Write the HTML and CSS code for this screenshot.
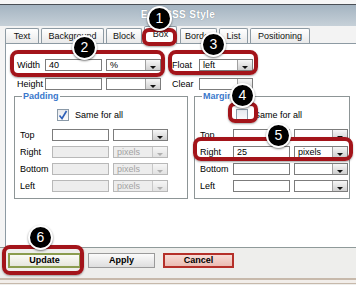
FILE: index.html
```html
<!DOCTYPE html>
<html>
<head>
<meta charset="utf-8">
<link rel="stylesheet" href="styles.css">
</head>
<body>
<div class="screen">
  <div class="topstrip"></div>
  <div class="titlebar">Edit CSS Style</div>
  <div class="tabstrip">
    <div class="tab t-text">Text</div>
    <div class="tab t-bg">Background</div>
    <div class="tab t-block">Block</div>
    <div class="tab t-box active">Box</div>
    <div class="tab t-border">Border</div>
    <div class="tab t-list">List</div>
    <div class="tab t-pos">Positioning</div>
  </div>
  <div class="panel">
    <div class="row r1">
      <span class="lbl lw">Width</span>
      <span class="inp w57">40</span>
      <span class="sel w55"><span class="val">%</span><span class="btn"></span></span>
      <span class="lbl lf">Float</span>
      <span class="sel w54"><span class="val">left</span><span class="btn"></span></span>
    </div>
    <div class="row r2">
      <span class="lbl lw">Height</span>
      <span class="inp w57"></span>
      <span class="sel w55"><span class="val"></span><span class="btn"></span></span>
      <span class="lbl lf">Clear</span>
      <span class="sel w54"><span class="val"></span><span class="btn"></span></span>
    </div>
    <div class="sets">
      <fieldset class="fs fs-pad">
        <legend>Padding</legend>
        <div class="same"><span class="cb checked"><svg width="10" height="10" viewBox="0 0 10 10"><path d="M1.5 5.5 L4 8.5 L8.5 1" fill="none" stroke="#2d5fb8" stroke-width="1.6"/></svg></span><span class="same-t">Same for all</span></div>
        <div class="frow"><span class="flbl">Top</span><span class="inp w57"></span><span class="sel w55"><span class="val"></span><span class="btn"></span></span></div>
        <div class="frow dis"><span class="flbl">Right</span><span class="inp w57"></span><span class="sel w55"><span class="val">pixels</span><span class="btn"></span></span></div>
        <div class="frow dis"><span class="flbl">Bottom</span><span class="inp w57"></span><span class="sel w55"><span class="val">pixels</span><span class="btn"></span></span></div>
        <div class="frow dis"><span class="flbl">Left</span><span class="inp w57"></span><span class="sel w55"><span class="val">pixels</span><span class="btn"></span></span></div>
      </fieldset>
      <fieldset class="fs fs-mar">
        <legend>Margin</legend>
        <div class="same m"><span class="cb"></span><span class="same-t">Same for all</span></div>
        <div class="frow"><span class="flbl">Top</span><span class="inp w57"></span><span class="sel w54"><span class="val"></span><span class="btn"></span></span></div>
        <div class="frow"><span class="flbl">Right</span><span class="inp w57">25</span><span class="sel w54"><span class="val">pixels</span><span class="btn"></span></span></div>
        <div class="frow"><span class="flbl">Bottom</span><span class="inp w57"></span><span class="sel w54"><span class="val"></span><span class="btn"></span></span></div>
        <div class="frow"><span class="flbl">Left</span><span class="inp w57"></span><span class="sel w54"><span class="val"></span><span class="btn"></span></span></div>
      </fieldset>
    </div>
  </div>
  <div class="footer">
    <div class="buttons">
      <span class="button b-update">Update</span>
      <span class="button b-apply">Apply</span>
      <span class="button b-cancel">Cancel</span>
    </div>
    <div class="footbar"></div>
  </div>

  <div class="hl h-box"></div>
  <div class="hl h-width"></div>
  <div class="hl h-float"></div>
  <div class="hl h-cb"></div>
  <div class="hl h-right"></div>
  <div class="hl h-update"></div>

  <div class="num n1">1</div>
  <div class="num n2">2</div>
  <div class="num n3">3</div>
  <div class="num n4">4</div>
  <div class="num n5">5</div>
  <div class="num n6">6</div>
</div>
</body>
</html>
```
FILE: styles.css
```css
* { box-sizing: border-box; }
html, body { margin: 0; padding: 0; }
body {
  width: 356px;
  height: 285px;
  overflow: hidden;
  background: #f4f4f4;
  font-family: "Liberation Sans", Arial, sans-serif;
  font-size: 9px;
  color: #000;
}
.screen { position: relative; width: 356px; height: 285px; overflow: hidden; }

.topstrip { height: 5px; background: #f6f6f6; border-bottom: 1px solid #4a4f55; }
.titlebar {
  height: 21px;
  background: linear-gradient(#a4b4c1, #c6d0d8);
  color: #fff;
  font-weight: bold;
  font-size: 10px;
  letter-spacing: 0.4px;
  text-align: center;
  line-height: 19px;
  text-shadow: 0 0 1px #6d7c88;
}
.tabstrip {
  height: 17px;
  background: #f3f3f3;
  display: flex;
  align-items: flex-end;
  padding-left: 5px;
  position: relative;
  z-index: 1;
}
.tab {
  height: 15px;
  border: 1px solid #8d9aa3;
  border-bottom: none;
  border-radius: 2px 2px 0 0;
  background: linear-gradient(#ffffff, #e9e9e9);
  line-height: 14px;
  text-align: center;
  font-size: 9px;
  color: #111;
  margin-right: 2px;
}
.tab.active { height: 17px; background: #fff; margin-bottom: -1px; height: 18px; }
.t-text { width: 34px; }
.t-bg { width: 63px; }
.t-block { width: 36px; }
.t-box { width: 33px; }
.t-border { width: 37px; margin-left: 1px; }
.t-list { width: 29px; }
.t-pos { width: 60px; }

.panel {
  height: 204px;
  background: #fff;
  border-top: 1px solid #8d9aa3;
  border-left: 1px solid #8d9aa3;
  margin-left: 5px;
  padding: 15px 0 0 11px;
}
.row { display: flex; align-items: center; height: 12px; }
.r2 { margin-top: 7px; }
.lbl { display: inline-block; }
.lw { width: 28px; }
.lf { width: 27px; margin-left: 11px; }

.inp, .sel {
  height: 12px;
  border: 1px solid #7c7c7c;
  background: #fff;
  line-height: 10px;
  padding-left: 3px;
  font-size: 9px;
  display: inline-flex;
  align-items: center;
}
.inp { margin-right: 4px; }
.w57 { width: 57px; }
.w55 { width: 55px; }
.w54 { width: 54px; }
.sel { padding-left: 0; justify-content: space-between; }
.sel .val { padding-left: 3px; }
.sel .btn {
  width: 15px;
  height: 10px;
  border-left: 1px solid #a0a0a0;
  background: linear-gradient(#f7f7f7, #cfcfcf);
  position: relative;
}
.sel .btn::after {
  content: "";
  position: absolute;
  left: 4px;
  bottom: 1px;
  border-left: 3.5px solid transparent;
  border-right: 3.5px solid transparent;
  border-top: 3px solid #111;
}

.sets { display: flex; margin-top: 1px; margin-left: -3px; }
.fs {
  margin: 0;
  border: 1px solid #8d9596;
  padding: 0 0 6px 5px;
  min-width: 0;
}
.fs legend {
  color: #3a78cc;
  font-weight: bold;
  font-size: 9px;
  padding: 0 1px;
  margin-left: 2px;
  line-height: 11px;
}
.fs-pad { width: 174px; }
.fs-mar { width: 156px; margin-left: 6px; }
.same { display: flex; align-items: center; height: 12px; margin-top: 7px; padding-left: 37px; }
.same.m { padding-left: 36px; }
.cb {
  width: 12px; height: 12px;
  border: 1px solid #8b9aa8;
  background: linear-gradient(#e6e9ee, #fbfbfb);
  display: inline-flex; align-items: center; justify-content: center;
}
.same-t { margin-left: 6px; }
.frow { display: flex; align-items: center; height: 12px; margin-top: 5px; }
.frow:nth-child(3) { margin-top: 8px; }
.flbl { width: 32px; }
.fs-mar .flbl { width: 33px; }
.dis .inp, .dis .sel { background: #ededed; border-color: #b8b8b8; }
.dis .sel .val { color: #a3a3a3; }
.dis .sel .btn { background: linear-gradient(#f6f6f6, #e2e2e2); border-left-color: #c8c8c8; }
.dis .sel .btn::after { border-top-color: #b0b0b0; }

.footer {
  height: 38px;
  border-top: 1px solid #8f9a9a;
  background: #eeeeec;
}
.buttons { display: flex; padding: 5px 0 0 8px; height: 30px; }
.button {
  height: 15px;
  font-weight: bold;
  font-size: 9px;
  text-align: center;
  line-height: 13px;
  border: 1px solid #9a9a9a;
  background: linear-gradient(#fbfbfb, #dedede);
}
.b-update { width: 73px; border: 2px solid #8b9c4e; background: linear-gradient(#fbfbf6, #e6e6dc); line-height: 11px; }
.b-apply { width: 67px; margin-left: 7px; }
.b-cancel { width: 71px; margin-left: 8px; border: 2px solid #b5302a; background: linear-gradient(#f7dcd6, #ebbcb3); line-height: 11px; }
.footbar { height: 6px; border-top: 2px solid #c7b9ab; border-bottom: 1px solid #c7b9ab; background: #f2eeea; }

.hl {
  position: absolute;
  border: 4px solid #a3141a;
  border-radius: 8px;
  box-shadow: 0 1px 2px rgba(0,0,0,0.35);
  z-index: 5;
}
.h-box { left: 142px; top: 28px; width: 35px; height: 18px; border-radius: 7px; }
.h-width { left: 10px; top: 50px; width: 155px; height: 27px; }
.h-float { left: 168px; top: 50px; width: 90px; height: 25px; }
.h-cb { left: 228px; top: 102px; width: 30px; height: 21px; border-radius: 7px; }
.h-right { left: 193px; top: 137px; width: 160px; height: 24px; }
.h-update { left: 2px; top: 245px; width: 82px; height: 30px; }

.num {
  position: absolute;
  width: 25px; height: 25px;
  border-radius: 50%;
  background: #000;
  border: 2px solid #fff;
  box-shadow: 0 1px 2px rgba(0,0,0,0.5);
  color: #fff;
  font-family: "Liberation Sans", Arial, sans-serif;
  font-size: 14px;
  line-height: 21px;
  text-align: center;
  z-index: 6;
}
.n1 { left: 147px; top: 6px; }
.n2 { left: 72px; top: 35px; }
.n3 { left: 201px; top: 32px; }
.n4 { left: 230px; top: 83px; }
.n5 { left: 266px; top: 123px; }
.n6 { left: 28px; top: 225px; }
```
